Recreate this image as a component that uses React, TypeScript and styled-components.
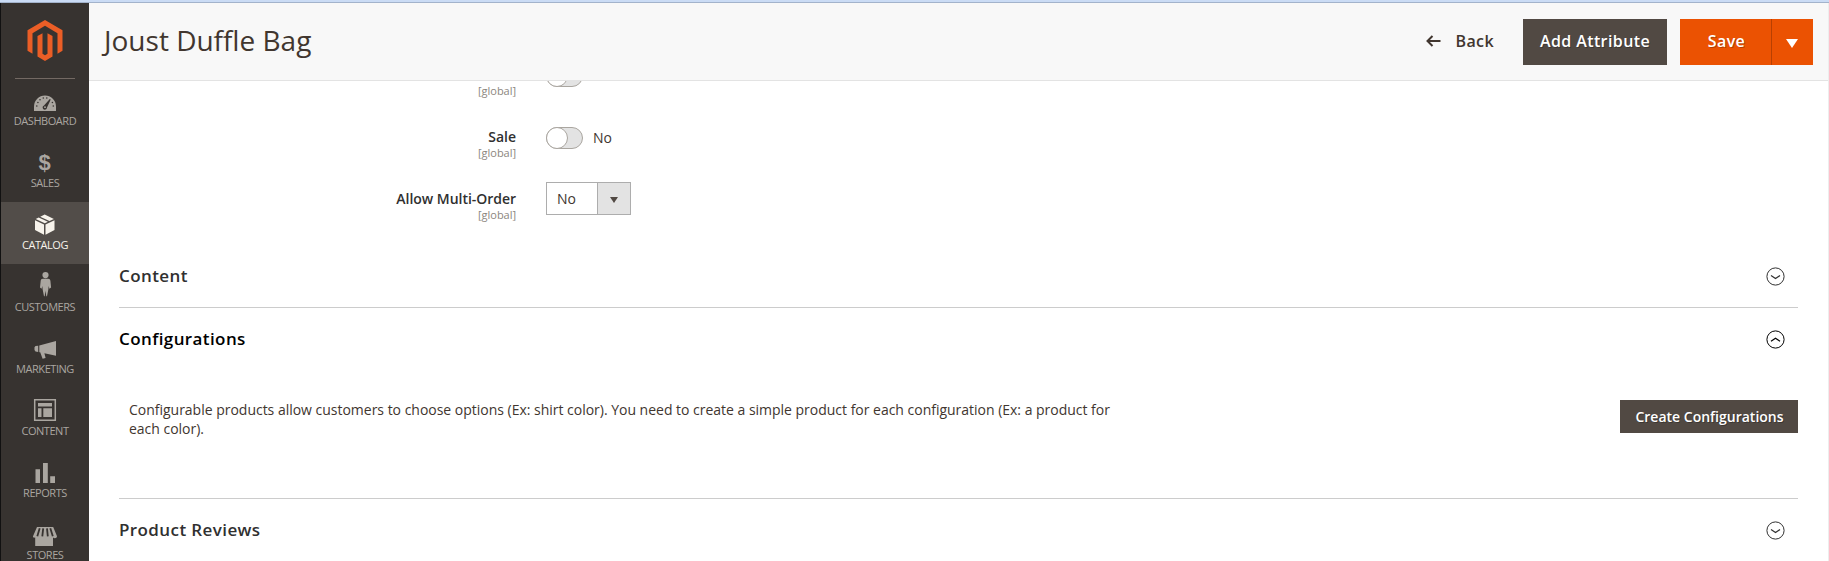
import React from 'react';
import styled, { createGlobalStyle } from 'styled-components';

const GlobalStyle = createGlobalStyle`
  *, *::before, *::after { box-sizing: border-box; }
  body {
    margin: 0;
    overflow: hidden;
    background: #fff;
    color: #41362f;
    font-family: 'Open Sans', 'Liberation Sans', sans-serif;
    font-size: 14px;
    line-height: 19px;
  }
`;

const Page = styled.div`
  display: flex;
  flex-direction: column;
  height: 561px;
  overflow: hidden;
`;

const WindowEdge = styled.div`
  flex: none;
  height: 3px;
  background: #cbdcf5;
  border-bottom: 1px solid #a3b3cb;
`;

const Shell = styled.div`
  display: flex;
  flex: 1;
  min-height: 0;
  border-left: 1px solid #111;
  border-right: 1px solid #ededed;
`;

const Sidebar = styled.nav`
  flex: none;
  display: flex;
  flex-direction: column;
  align-items: center;
  width: 88px;
  overflow: hidden;
  background: #373330;
`;

const LogoBox = styled.div`
  flex: none;
  width: 60px;
  height: 76px;
  padding-top: 17px;
  border-bottom: 1px solid #736963;

  svg { display: block; margin: 0 auto; }
`;

const MenuItem = styled.a<{ $active?: boolean }>`
  flex: none;
  display: flex;
  flex-direction: column;
  align-items: center;
  width: 88px;
  height: 62px;
  padding-top: 6px;
  background: ${(p) => (p.$active ? '#524d49' : 'transparent')};
  color: ${(p) => (p.$active ? '#f7f3eb' : '#aaa6a0')};

  &:first-of-type { height: 61px; padding-top: 5px; }

  svg { display: block; flex: none; overflow: visible; }
`;

const MenuLabel = styled.span`
  margin-top: -2px;
  font-size: 11px;
  line-height: 15px;
  letter-spacing: -0.45px;
  text-transform: uppercase;
  white-space: nowrap;
`;

const Main = styled.main`
  flex: 1;
  display: flex;
  flex-direction: column;
  min-width: 0;
`;

const Header = styled.header`
  flex: none;
  display: flex;
  align-items: center;
  justify-content: space-between;
  height: 78px;
  padding: 0 15px;
  background: #f8f8f8;
  border-bottom: 1px solid #e3e3e3;
`;

const Title = styled.h1`
  margin: 0;
  padding-bottom: 3px;
  font-size: 28px;
  font-weight: 400;
  line-height: 38px;
`;

const Actions = styled.div`
  display: flex;
  align-items: center;
`;

const BackButton = styled.button`
  display: flex;
  align-items: center;
  gap: 14px;
  margin-right: 29px;
  padding: 0 0 2px;
  border: 0;
  background: none;
  color: #41362f;
  font: 600 16px/22px 'Open Sans', sans-serif;
  letter-spacing: 0.4px;
`;

const DarkButton = styled.button<{ $large?: boolean }>`
  flex: none;
  width: ${(p) => (p.$large ? 144 : 178)}px;
  height: ${(p) => (p.$large ? 46 : 33)}px;
  padding: ${(p) => (p.$large ? '0 0 2px' : '0 0 0 1px')};
  border: 0;
  background: #514943;
  color: #fff;
  font: 600 ${(p) => (p.$large ? 16 : 14)}px/22px 'Open Sans', sans-serif;
  letter-spacing: ${(p) => (p.$large ? '0.4px' : '0')};
  text-shadow: 1px 1px 0 rgba(0, 0, 0, 0.25);
  white-space: nowrap;
`;

const SplitButton = styled.div`
  display: flex;
  width: 133px;
  height: 46px;
  margin-left: 13px;
  background: #eb5202;
`;

const SaveButton = styled.button`
  width: 92px;
  padding: 0 0 2px 2px;
  border: 0;
  border-right: 1px solid #b84002;
  background: none;
  color: #fff;
  font: 600 16px/22px 'Open Sans', sans-serif;
  letter-spacing: 0.4px;
  text-shadow: 1px 1px 0 rgba(0, 0, 0, 0.25);
`;

const SaveToggle = styled.button`
  flex: 1;
  display: flex;
  align-items: center;
  justify-content: center;
  padding: 3px 1px 0 0;
  border: 0;
  background: none;
`;

const Content = styled.div`
  flex: 1;
  min-height: 0;
  overflow: hidden;
  padding: 0 30px;
`;

const Fields = styled.div`
  display: flex;
  flex-direction: column;
  height: 164px;
  overflow: hidden;
`;

const Field = styled.div<{ $clipped?: boolean }>`
  flex: none;
  display: flex;
  gap: 30px;
  height: 62px;
  margin-top: ${(p) => (p.$clipped ? '-16px' : '0')};
  padding-top: 0;
`;

const FieldLabel = styled.div<{ $clipped?: boolean }>`
  width: 397px;
  padding-top: ${(p) => (p.$clipped ? '19px' : '0')};
  color: #303030;
  font-weight: 600;
  text-align: right;
  line-height: 19px;
  letter-spacing: -0.03px;
`;

const Scope = styled.div`
  color: #8c867e;
  font-size: 11px;
  font-weight: 400;
  line-height: 13px;
`;

const SwitchRow = styled.div`
  display: flex;
  gap: 10px;
  line-height: 22px;
`;

const Switch = styled.span`
  display: block;
  width: 37px;
  height: 22px;
  border: 1px solid #aaa6a0;
  border-radius: 11px;
  background: #e3e3e3;

  &::before {
    content: '';
    display: block;
    width: 22px;
    height: 22px;
    margin: -1px;
    border: 1px solid #aaa6a0;
    border-radius: 50%;
    background: #fff;
  }
`;

const Select = styled.div`
  display: flex;
  width: 85px;
  height: 33px;
  margin-top: -7px;
  border: 1px solid #adadad;
  line-height: 31px;
`;

const SelectValue = styled.span`
  flex: 1;
  padding-left: 10px;
`;

const SelectArrow = styled.span`
  display: flex;
  align-items: center;
  justify-content: center;
  width: 33px;
  padding-top: 2px;
  border-left: 1px solid #adadad;
  background: #e3e3e3;
`;

const Section = styled.section<{ $height: number }>`
  height: ${(p) => p.$height}px;
  border-bottom: 1px solid #ccc;
`;

const SectionHeader = styled.div<{ $open?: boolean }>`
  display: flex;
  align-items: center;
  justify-content: space-between;
  height: 62px;
  padding-right: 13px;
  color: ${(p) => (p.$open ? '#000' : '#303030')};

  svg { display: block; margin-top: 1px; }
`;

const SectionTitle = styled.h2`
  margin: 0;
  padding-bottom: 2px;
  font-size: 17px;
  font-weight: 600;
  line-height: 23px;
  letter-spacing: 0.4px;
`;

const SectionBody = styled.div`
  display: flex;
  justify-content: space-between;
  align-items: flex-start;
  padding: 30px 0 0 10px;
`;

const Note = styled.p`
  width: 1000px;
  margin: 0;
  letter-spacing: -0.015px;
`;

const Caret = ({ width, height, color }: { width: number; height: number; color: string }) => (
  <svg width={width} height={height} viewBox="0 0 12 9" preserveAspectRatio="none">
    <path d="M0 0h12L6 9z" fill={color} />
  </svg>
);

const Chevron = ({ up }: { up?: boolean }) => (
  <svg width="19" height="19" viewBox="0 0 19 19" fill="none" stroke="currentColor">
    <circle cx="9.500" cy="9.500" r="8.600" strokeWidth="1" />
    <path d={up ? 'M5 11.300l4.500-3 4.500 3' : 'M5 8.600l4.500 3 4.500-3'} strokeWidth="1.200" />
  </svg>
);

const icons: Record<string, React.ReactNode> = {
  Dashboard: (
    <>
      <path d="M3 27v-4.500a11 11 0 0 1 22 0V27z" fill="currentColor" />
      <g fill="#373330">
        <circle cx="5.800" cy="22" r=".8" />
        <circle cx="6.900" cy="18.500" r=".8" />
        <circle cx="9" cy="15.700" r=".8" />
        <circle cx="12.300" cy="14" r=".8" />
        <circle cx="15.800" cy="14" r=".8" />
        <circle cx="21.400" cy="18.500" r=".8" />
        <circle cx="22.300" cy="22" r=".8" />
        <path d="M18.800 15l.9.600-3.700 8a2.200 2.200 0 1 1-3-2.100z" />
      </g>
      <circle cx="14" cy="23.200" r=".9" fill="currentColor" />
    </>
  ),
  Sales: (
    <text x="13.500" y="24" textAnchor="middle" fill="currentColor" fontFamily="Liberation Sans, sans-serif" fontWeight="700" fontSize="22">
      $
    </text>
  ),
  Catalog: (
    <path
      d="M4 12.200l9 4.200v10.300l-9-4.600zM23.500 12.200v9.900l-9 4.600V16.400zM4.700 10.900l3-1.500 9.200 4.300-3.100 1.500zM9.200 8.700l4.500-2.200 9.200 4.400-4.500 2.100z"
      fill="currentColor"
    />
  ),
  Customers: (
    <path
      d="M14.500 2a3 3 0 0 1 0 6.200 3 3 0 0 1 0-6.200zM11.800 8.700h5.400c1.300 0 2 .8 2.200 2l.7 6.800-1.700 1.200-.7-2.700-.4 3.800-1.300 6.500h-.7l-.8-5.500-.8 5.500H13l-1.300-6.500-.4-3.800-.7 2.700L9 17.500l.7-6.800c.1-1.200.8-2 2.100-2z"
      fill="currentColor"
    />
  ),
  Marketing: (
    <path d="M25 9v14.800l-11.600-2.600 1.200 4.900-3 .7-2.400-6.600H8.300v-6.700zM7.200 13.700v6.300l-2.700-.6-1-1.300v-2.800l1-1.200z" fill="currentColor" />
  ),
  Content: (
    <>
      <path d="M3.700 5.700h20.600v20.600H3.700z" fill="none" stroke="currentColor" strokeWidth="1.500" />
      <path d="M7 9h14v3.500H7zM7 14.200h3.500V23H7zM12.300 14.200H21V23h-8.700z" fill="currentColor" />
    </>
  ),
  Reports: <path d="M4.500 13.300H9V27H4.500zM12 7h4.800v20H12zM19.200 20.300H24V27h-4.800z" fill="currentColor" />,
  Stores: (
    <>
      <path d="M6 9h16.200l3.800 9.200c0 2-2.500 2.500-4 1.300V28H4.200v-8.500c-1.500.5-2.500-.2-2.200-1.300z" fill="currentColor" />
      <path d="M8.700 10.300L6.300 18.300M12.200 10.300L11.300 18.300M16 10.300l.8 8M19.300 10.300l2.500 8" stroke="#373330" strokeWidth="1.800" />
    </>
  ),
};

const menu = ['Dashboard', 'Sales', 'Catalog', 'Customers', 'Marketing', 'Content', 'Reports', 'Stores'];

export default function App() {
  return (
    <>
      <GlobalStyle />
      <Page>
        <WindowEdge />
        <Shell>
          <Sidebar>
            <LogoBox>
              <svg width="36" height="41" viewBox="1.309 0 21.380 24" preserveAspectRatio="none">
                <path
                  fill="#eb5e26"
                  d="M12 24l-4.455-2.572v-12l2.970-1.715v12.001l1.485.902 1.485-.902V7.713l2.971 1.715v12L12 24zM22.391 6v12l-2.969 1.714V7.713L12 3.430 4.574 7.713v12.001L1.609 18V6L12 0l10.391 6z"
                />
              </svg>
            </LogoBox>
            {menu.map((name) => (
              <MenuItem key={name} $active={name === 'Catalog'}>
                <svg width="28" height="31" viewBox="0 0 28 31">
                  {icons[name]}
                </svg>
                <MenuLabel>{name}</MenuLabel>
              </MenuItem>
            ))}
          </Sidebar>
          <Main>
            <Header>
              <Title>Joust Duffle Bag</Title>
              <Actions>
                <BackButton>
                  <svg width="15" height="12" viewBox="0 0 15 12" fill="none" stroke="currentColor" strokeWidth="2">
                    <path d="M14.500 6H1.500M6.500 1L1.500 6l5 5" />
                  </svg>
                  Back
                </BackButton>
                <DarkButton $large>Add Attribute</DarkButton>
                <SplitButton>
                  <SaveButton>Save</SaveButton>
                  <SaveToggle aria-label="Save options">
                    <Caret width={12} height={9} color="#fff" />
                  </SaveToggle>
                </SplitButton>
              </Actions>
            </Header>
            <Content>
              <Fields>
                <Field $clipped>
                  <FieldLabel $clipped>
                    <Scope>[global]</Scope>
                  </FieldLabel>
                  <SwitchRow>
                    <Switch />
                  </SwitchRow>
                </Field>
                <Field>
                  <FieldLabel>
                    Sale
                    <Scope>[global]</Scope>
                  </FieldLabel>
                  <SwitchRow>
                    <Switch />
                    No
                  </SwitchRow>
                </Field>
                <Field>
                  <FieldLabel>
                    Allow Multi-Order
                    <Scope>[global]</Scope>
                  </FieldLabel>
                  <Select>
                    <SelectValue>No</SelectValue>
                    <SelectArrow>
                      <Caret width={8} height={6} color="#514943" />
                    </SelectArrow>
                  </Select>
                </Field>
              </Fields>
              <Section $height={63}>
                <SectionHeader>
                  <SectionTitle>Content</SectionTitle>
                  <Chevron />
                </SectionHeader>
              </Section>
              <Section $height={191}>
                <SectionHeader $open>
                  <SectionTitle>Configurations</SectionTitle>
                  <Chevron up />
                </SectionHeader>
                <SectionBody>
                  <Note>
                    Configurable products allow customers to choose options (Ex: shirt color). You need to create a
                    simple product for each configuration (Ex: a product for each color).
                  </Note>
                  <DarkButton>Create Configurations</DarkButton>
                </SectionBody>
              </Section>
              <SectionHeader>
                <SectionTitle>Product Reviews</SectionTitle>
                <Chevron />
              </SectionHeader>
            </Content>
          </Main>
        </Shell>
      </Page>
    </>
  );
}
